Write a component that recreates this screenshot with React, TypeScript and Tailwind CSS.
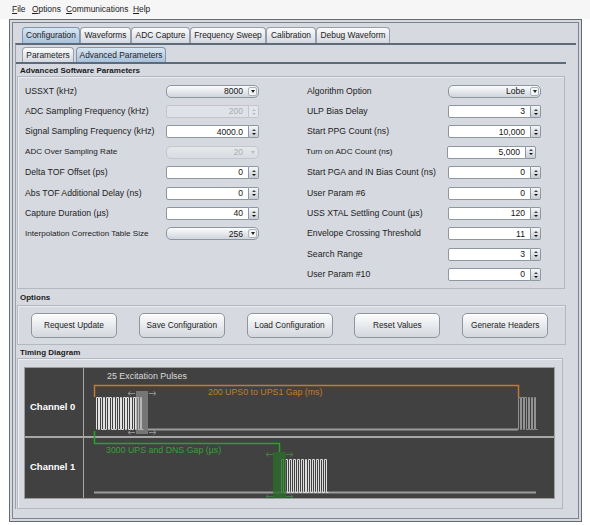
import React from "react";

const FONT = { fontFamily: '"Liberation Sans", Arial, sans-serif' };

function Spin({ value, disabled = false, narrow = false }: { value: string; disabled?: boolean; narrow?: boolean }) {
  return (
    <div className={`flex h-[13px] ${narrow ? "w-[89px]" : "w-[93px]"}`}>
      <div
        className={`flex flex-1 items-center justify-end rounded-l-[2px] border pr-[5px] text-[8.6px] leading-none ${
          disabled ? "border-[#c2c6cc] bg-[#dfe2e6] text-[#a9acb1]" : "border-[#8d97a2] bg-white text-[#151515]"
        }`}
      >
        {value}
      </div>
      <div
        className={`flex w-[10px] flex-col rounded-r-[2px] border border-l-0 ${
          disabled ? "border-[#c2c6cc] bg-[#e2e5e9]" : "border-[#8d97a2] bg-linear-to-b from-[#f6f7f9] to-[#c8cdd4]"
        }`}
      >
        <div className="flex flex-1 items-end justify-center pb-[1px]">
          <div className={`h-0 w-0 border-x-[2px] border-b-[2px] border-x-transparent ${disabled ? "border-b-[#b8bcc1]" : "border-b-[#444]"}`} />
        </div>
        <div className="flex flex-1 items-start justify-center pt-[1px]">
          <div className={`h-0 w-0 border-x-[2px] border-t-[2px] border-x-transparent ${disabled ? "border-t-[#b8bcc1]" : "border-t-[#111]"}`} />
        </div>
      </div>
    </div>
  );
}

function Combo({ value, disabled = false }: { value: string; disabled?: boolean }) {
  return (
    <div
      className={`flex h-[13px] w-[93px] items-center rounded-[5px] border ${
        disabled
          ? "border-[#c4c8ce] bg-linear-to-b from-[#e6e8eb] to-[#d9dce1] text-[#abaeb3]"
          : "border-[#8d97a2] bg-linear-to-b from-[#fcfcfd] to-[#d0d5dc] text-[#151515]"
      }`}
    >
      <span className="flex-1 pr-[5px] text-right text-[8.6px] leading-none">{value}</span>
      <div
        className={`mr-[1px] flex h-[9px] w-[9px] items-center justify-center rounded-[2px] ${
          disabled ? "" : "border border-[#aab2bc] bg-[#f2f4f6]"
        }`}
      >
        <div className={`h-0 w-0 border-x-[2px] border-t-[3px] border-x-transparent ${disabled ? "border-t-[#b8bcc1]" : "border-t-[#222]"}`} />
      </div>
    </div>
  );
}

function Row({ label, small = false, shift = false, children }: { label: string; small?: boolean; shift?: boolean; children: React.ReactNode }) {
  return (
    <div className="flex h-[20.4px] items-center">
      <div className={`w-[141px] whitespace-nowrap text-[#1c1c1c] ${small ? "text-[8.1px]" : "text-[8.7px]"} ${shift ? "-ml-[1px]" : ""}`}>{label}</div>
      {children}
    </div>
  );
}

function Btn({ label }: { label: string }) {
  return (
    <div className="flex h-[25px] w-[86px] items-center justify-center rounded-[5px] border border-[#8e959e] bg-linear-to-b from-[#fdfdfd] to-[#d3d7dd] text-[8.3px] text-[#222] shadow-[inset_0_1px_0_#ffffff]">
      {label}
    </div>
  );
}

function pulses(x0: number, x1: number, n: number, top: number, bot: number) {
  const p = (x1 - x0) / n;
  let d = "";
  for (let i = 0; i < n; i++) {
    const xa = Math.round(x0 + i * p) + 0.5;
    const xb = Math.round(x0 + i * p + p * 0.5) + 0.5;
    const xc = Math.round(x0 + (i + 1) * p) + 0.5;
    d += ` M${xa} ${bot} V${top} H${xb} V${bot} H${xc}`;
  }
  return d;
}

function Arrows({ l, r, x1, x2, y, color }: { l: number; r: number; x1: number; x2: number; y: number; color: string }) {
  return (
    <g stroke={color} strokeWidth={1} fill="none">
      <path d={`M${x1} ${y} H${l}`} />
      <path d={`M${l + 2.5} ${y - 2} L${l} ${y} L${l + 2.5} ${y + 2}`} />
      <path d={`M${x2} ${y} H${r}`} />
      <path d={`M${r - 2.5} ${y - 2} L${r} ${y} L${r - 2.5} ${y + 2}`} />
    </g>
  );
}

function Diagram() {
  return (
    <svg width={470} height={130} viewBox="0 0 470 130" className="block">
      <rect x={0} y={68} width={470} height={2} fill="#a7a7a7" />
      <text x={23} y={11} fontSize={8.9} fill="#d9d9d9" fontFamily="Liberation Sans, Arial, sans-serif">
        25 Excitation Pulses
      </text>
      <path d="M10.5 29 V17.5 H434.5 V29" stroke="#c17a2e" strokeWidth={1.5} fill="none" />
      <text x={124} y={27} fontSize={8.8} fill="#c57b2c" fontFamily="Liberation Sans, Arial, sans-serif">
        200 UPS0 to UPS1 Gap (ms)
      </text>
      <path d={pulses(12, 59, 14, 29.5, 61.5)} stroke="#e2e2e2" strokeWidth={1} fill="none" />
      <path d="M64 61.5 H434" stroke="#9c9c9c" strokeWidth={2} />
      <rect x={52} y={23} width={12} height={43} fill="#9a9a9a" opacity={0.6} />
      <Arrows l={44} r={72} x1={51} x2={65} y={25.5} color="#8e8e8e" />
      <Arrows l={44} r={72} x1={51} x2={65} y={64.5} color="#8e8e8e" />
      <path d={pulses(434, 453, 6, 29.5, 61.5)} stroke="#929292" strokeWidth={1} fill="none" />

      <path d="M10.5 63 V75.5 H195.5 V84" stroke="#25a525" strokeWidth={1.5} fill="none" />
      <text x={22} y={85} fontSize={8.8} fill="#33a333" fontFamily="Liberation Sans, Arial, sans-serif">
        3000 UPS and DNS Gap (µs)
      </text>
      <path d="M10 124.5 H452" stroke="#9c9c9c" strokeWidth={2} />
      <path d={pulses(197, 244, 12, 91.5, 124.5)} stroke="#dcdcdc" strokeWidth={1} fill="none" />
      <rect x={189} y={84} width={13} height={46} fill="#2c6c2c" opacity={0.8} />
      <Arrows l={182} r={209} x1={189} x2={202} y={86.5} color="#3f7f3f" />
      <Arrows l={182} r={209} x1={189} x2={202} y={128.5} color="#3f7f3f" />
    </svg>
  );
}

export default function App() {
  const tabs: [string, string, boolean][] = [
    ["Configuration", "w-[58px]", true],
    ["Waveforms", "w-[51px]", false],
    ["ADC Capture", "w-[59px]", false],
    ["Frequency Sweep", "w-[76px]", false],
    ["Calibration", "w-[50px]", false],
    ["Debug Waveform", "w-[74px]", false],
  ];
  const sel = "bg-linear-to-b from-[#d9e6f2] to-[#a8c2dc] border-[#7d95ad]";
  const unsel = "bg-linear-to-b from-[#fafbfc] to-[#d4d8df] border-[#959eaa]";

  return (
    <div style={FONT} className="h-[525px] w-[590px] overflow-hidden bg-white text-[#1c1c1c]">
      <div className="flex h-[19px] items-center bg-[#f6f6f6] pl-[12px] text-[8.4px] text-[#222]">
        <span className="w-[20px]"><span className="underline">F</span>ile</span>
        <span className="w-[34px]"><span className="underline">O</span>ptions</span>
        <span className="w-[67px]"><span className="underline">C</span>ommunications</span>
        <span><span className="underline">H</span>elp</span>
      </div>

      <div className="ml-[9px] h-[503px] w-[573px] border border-[#666b72] bg-[#d6d9df] p-[2px]">
        <div className="h-full border border-[#7c848e] bg-[#d6d9df] pl-[2px] pt-[4px]">
          <div className="w-[561px]">
            <div className="flex h-[16px] pl-[7px]">
              {tabs.map(([t, w, s]) => (
                <div key={t} className={`flex h-[16px] items-center justify-center rounded-t-[4px] border border-b-0 text-[8.4px] text-[#222] ${w} ${s ? sel : unsel}`}>
                  {t}
                </div>
              ))}
            </div>
            <div className="border-l border-t-[2px] border-l-[#9aa2ac] border-t-[#5d6a79] pt-[2px]">
              <div className="flex h-[15px] gap-[2px] pl-[6px]">
                <div className={`flex h-[15px] w-[52px] items-center justify-center rounded-t-[4px] border border-b-0 text-[8.4px] text-[#222] ${unsel}`}>Parameters</div>
                <div className={`flex h-[15px] w-[90px] items-center justify-center rounded-t-[4px] border border-b-0 text-[8.4px] text-[#222] ${sel}`}>Advanced Parameters</div>
              </div>
              <div className="w-[550px] border-t-[2px] border-t-[#5d6a79]">
                <div className="mt-[1px] h-[11px] pl-[4px] text-[8px] font-bold leading-[11px] text-[#1a1a1a]">Advanced Software Parameters</div>
                <div className="ml-[1px] flex h-[213px] w-[548px] border border-[#b3b8bf] pl-[7px] pt-[4px] shadow-[inset_1px_1px_0_#e9ebee]">
                  <div className="flex flex-col">
                    <Row label="USSXT (kHz)"><Combo value="8000" /></Row>
                    <Row label="ADC Sampling Frequency (kHz)"><Spin value="200" disabled /></Row>
                    <Row label="Signal Sampling Frequency (kHz)"><Spin value="4000.0" /></Row>
                    <Row label="ADC Over Sampling Rate" small><Combo value="20" disabled /></Row>
                    <Row label="Delta TOF Offset (ps)"><Spin value="0" /></Row>
                    <Row label="Abs TOF Additional Delay (ns)"><Spin value="0" /></Row>
                    <Row label="Capture Duration (µs)"><Spin value="40" /></Row>
                    <Row label="Interpolation Correction Table Size" small><Combo value="256" /></Row>
                  </div>
                  <div className="ml-[48px] flex flex-col">
                    <Row label="Algorithm Option"><Combo value="Lobe" /></Row>
                    <Row label="ULP Bias Delay"><Spin value="3" /></Row>
                    <Row label="Start PPG Count (ns)"><Spin value="10,000" /></Row>
                    <Row label="Turn on ADC Count (ns)" small shift><Spin value="5,000" narrow /></Row>
                    <Row label="Start PGA and IN Bias Count (ns)"><Spin value="0" /></Row>
                    <Row label="User Param #6"><Spin value="0" /></Row>
                    <Row label="USS XTAL Settling Count (µs)"><Spin value="120" /></Row>
                    <Row label="Envelope Crossing Threshold"><Spin value="11" /></Row>
                    <Row label="Search Range"><Spin value="3" /></Row>
                    <Row label="User Param #10"><Spin value="0" /></Row>
                  </div>
                </div>

                <div className="mt-[3px] h-[11px] pl-[4px] text-[8px] font-bold leading-[11px] text-[#1a1a1a]">Options</div>
                <div className="ml-[1px] mt-[2px] flex h-[40px] w-[549px] items-center gap-[21.8px] border border-[#b3b8bf] pl-[13px] shadow-[inset_1px_1px_0_#e9ebee]">
                  <Btn label="Request Update" />
                  <Btn label="Save Configuration" />
                  <Btn label="Load Configuration" />
                  <Btn label="Reset Values" />
                  <Btn label="Generate Headers" />
                </div>

                <div className="mt-[2px] h-[11px] pl-[4px] text-[8px] font-bold leading-[11px] text-[#1a1a1a]">Timing Diagram</div>
                <div className="ml-[1px] h-[151px] w-[546px] border border-[#b3b8bf] pl-[6px] pt-[8px] shadow-[inset_1px_1px_0_#eceef1]">
                  <div className="flex h-[132px] w-[531px] border border-[#9d9d9d] bg-[#414141]">
                    <div className="flex w-[59px] flex-col border-r border-r-[#a7a7a7]">
                      <div className="h-[68px] pl-[5px] pt-[32px] text-[9.5px] font-bold text-white">Channel 0</div>
                      <div className="h-[2px] bg-[#a7a7a7]" />
                      <div className="h-[60px] pl-[5px] pt-[22px] text-[9.5px] font-bold text-white">Channel 1</div>
                    </div>
                    <Diagram />
                  </div>
                </div>
              </div>
            </div>
          </div>
        </div>
      </div>
    </div>
  );
}
